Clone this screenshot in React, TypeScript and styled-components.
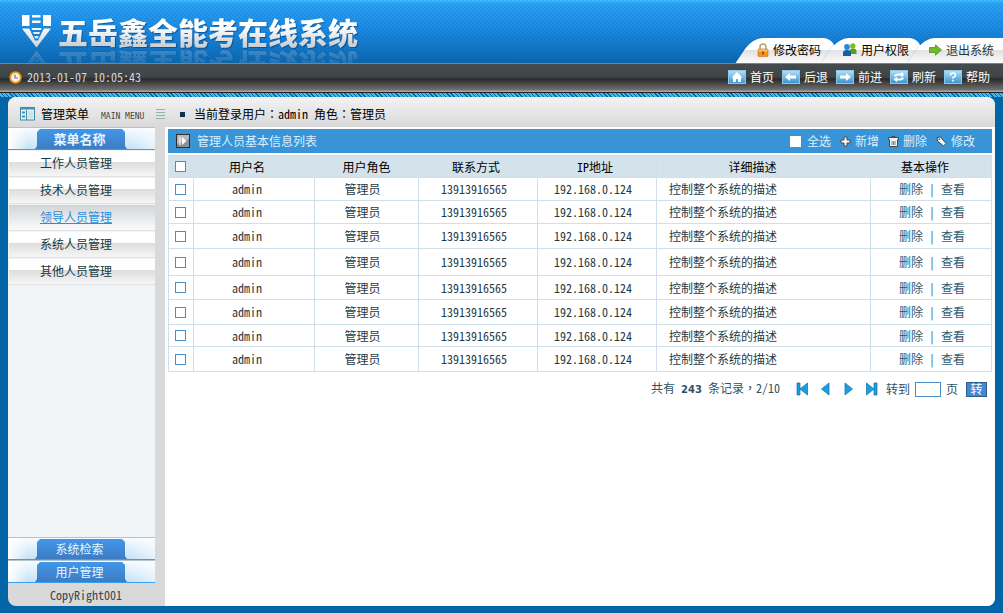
import React from "react";
import styled, { createGlobalStyle, css } from "styled-components";

const GlobalStyle = createGlobalStyle`
  *, *::before, *::after { box-sizing: border-box; }
  html, body { margin: 0; padding: 0; }
  body {
    background: #0465a6;
    color: #1f3a44;
    font-family: "Noto Sans Mono CJK SC", "Liberation Mono", "Noto Sans CJK SC", monospace;
    font-size: 12px;
    line-height: 16px;
  }
  a { color: inherit; text-decoration: none; }
  button, input { font: inherit; margin: 0; }
`;

const Page = styled.div`
  min-height: 100vh;
  display: flex;
  flex-direction: column;
`;

const Header = styled.header`
  height: 64px;
  display: flex;
  justify-content: space-between;
  align-items: flex-start;
  overflow: hidden;
  border-bottom: 1px solid #4f93a6;
  background:
    repeating-conic-gradient(rgba(0, 40, 120, 0.08) 0 25%, transparent 0 50%) 0 0 / 4px 4px,
    linear-gradient(#3cc0ff 0, #2aa3f4 4px, #1b8be2 28px, #0b68b0 63px);
`;

const Brand = styled.div`
  display: flex;
  align-items: flex-start;
  gap: 6px;
  padding: 14px 0 0 22px;
  -webkit-box-reflect: below 2px linear-gradient(transparent 55%, rgba(255, 255, 255, 0.25));
`;

const BrandName = styled.h1`
  margin: 0;
  font-family: "Noto Sans CJK SC", sans-serif;
  font-size: 30px;
  line-height: 34px;
  font-weight: 900;
  color: transparent;
  background: linear-gradient(#fff 40%, #cdd2d6 90%);
  background-clip: text;
  -webkit-background-clip: text;
  filter: drop-shadow(1px 1px 0 rgba(0, 50, 110, 0.5));
`;

const Tabs = styled.nav`
  display: flex;
  align-self: flex-end;
`;

const tabFace = css`
  background: linear-gradient(#fff 0 46%, #e2e2e2 50%, #fbfbfb 100%);
`;

const Tab = styled.a<{ $last?: boolean }>`
  position: relative;
  height: 25px;
  width: ${(p) => (p.$last ? 82 : 86)}px;
  display: flex;
  align-items: center;
  gap: 4px;
  padding: 0 0 2px 8px;
  color: ${(p) => (p.$last ? "#223a44" : "#000")};
  border-radius: 24px ${(p) => (p.$last ? 0 : 12)}px 0 0;
  ${tabFace}

  &::before {
    content: "";
    position: absolute;
    left: -5px;
    bottom: 0;
    width: 24px;
    height: 25px;
    border-top-left-radius: 10px;
    transform: skewX(-34deg);
    box-shadow: -1px 0 1px rgba(0, 60, 120, 0.12);
    ${tabFace}
  }
  svg, span { position: relative; }
`;

const ToolStrip = styled.div`
  height: 29px;
  display: flex;
  align-items: center;
  justify-content: space-between;
  padding: 0 13px 2px 9px;
  border-bottom: 1px solid #222;
  background: linear-gradient(#454b4e 0, #3f4547 13px, #2a2a2a 15px, #4a4a4a 20px, #717171 26px, #a5a5a5 27px);
`;

const Clock = styled.div`
  display: flex;
  align-items: center;
  gap: 5px;
  color: #d4d4d4;
`;

const Tools = styled.nav`
  display: flex;
  gap: 8px;
`;

const Tool = styled.a`
  display: flex;
  align-items: center;
  gap: 4px;
  color: #fff;
`;

const ToolIcon = styled.svg`
  width: 18px;
  height: 14px;
  background: linear-gradient(#b4dcf2, #3a97d4);
  border: 1px solid #8fc6e6;
`;

const Weave = styled.div`
  height: 4px;
  background: repeating-linear-gradient(45deg, #0465a6 0 1px, #4db6e8 1px 3px);
`;

const Shell = styled.div`
  flex: 1;
  display: flex;
  flex-direction: column;
  margin: 0 8px 7px;
  border-radius: 8px;
  overflow: hidden;
  background: #d9d9d9;
`;

const Crumbs = styled.div`
  height: 30px;
  display: flex;
  align-items: center;
  padding: 4px 12px 0;
  color: #000;
  background: linear-gradient(#f3f3f3, #d9d9d9);
`;

const SideHeading = styled.div`
  flex: 0 0 136px;
  display: flex;
  align-items: center;
  gap: 6px;
`;

const SmallCaps = styled.span`
  margin-left: 6px;
  padding-top: 6px;
  font: 8px/12px "DejaVu Sans Mono", monospace;
  color: #444;
`;

const Where = styled.div`
  display: flex;
  align-items: center;
  gap: 9px;
  margin-left: 14px;

  &::before {
    content: "";
    width: 5px;
    height: 5px;
    background: #0b3350;
  }
`;

const Punct = styled.span`
  font-family: "Noto Sans Mono CJK TC", "Noto Sans CJK TC", monospace;
`;

const Columns = styled.div`
  flex: 1;
  display: flex;
  gap: 10px;
`;

const Sidebar = styled.aside`
  flex: 0 0 147px;
  display: flex;
  flex-direction: column;
`;

const SideBody = styled.div`
  flex: 1;
  background: #f0f4f7;
`;

const Group = styled.button<{ $strong?: boolean }>`
  display: block;
  width: 100%;
  height: 23px;
  padding: 1px 29px 0 28px;
  border: 0;
  border-top: 1px solid #b4c4cf;
  border-bottom: 1px solid #3b9fee;
  background: linear-gradient(90deg, #fff, transparent 20px, transparent calc(100% - 24px), #fff8),
    linear-gradient(#f8fcff, #c6e2f6);
  color: #e8f6ff;
  font-size: ${(p) => (p.$strong ? 13 : 12)}px;
  font-weight: ${(p) => (p.$strong ? 700 : 400)};
  line-height: 20px;

  span {
    display: block;
    height: 20px;
    margin: 0 -1px;
    padding-right: 3px;
    background: linear-gradient(#4297ea, #3d7cc2);
    clip-path: polygon(0 100%, 2px 85%, 2px 3px, 5px 0, calc(100% - 5px) 0, calc(100% - 2px) 3px, calc(100% - 2px) 85%, 100% 100%);
  }
`;

const MenuList = styled.ul`
  margin: 0;
  padding: 1px 0 0 1px;
  list-style: none;
`;

const MenuLink = styled.a<{ $on?: boolean }>`
  display: block;
  height: 26px;
  margin-bottom: 1px;
  padding-left: 31px;
  line-height: 23px;
  border-bottom: 1px solid #dfe2e4;
  color: ${(p) => (p.$on ? "#2a8fdc" : "#14393f")};
  text-decoration: ${(p) => (p.$on ? "underline" : "none")};
  background: ${(p) =>
    p.$on ? "linear-gradient(#d2d5d8, #fbfbfb)" : "linear-gradient(#fff 0 42%, #dedede 46%, #f6f6f6 100%)"};
`;

const Copy = styled.footer`
  height: 23px;
  padding: 4px 0 0 42px;
  color: #444;
`;

const Main = styled.main`
  flex: 1;
  min-width: 0;
  padding: 2px 3px 0;
  background: #fff;
`;

const ListBar = styled.div`
  height: 24px;
  display: flex;
  align-items: center;
  justify-content: space-between;
  padding: 0 17px 0 8px;
  margin-bottom: 2px;
  background: #3894d6;
  color: #d9efff;
`;

const ListTitle = styled.h2`
  display: flex;
  align-items: center;
  gap: 7px;
  margin: 0;
  font-size: 12px;
  font-weight: 400;
`;

const Actions = styled.div`
  display: flex;
  align-items: center;
  gap: 9px;
`;

const SelectAll = styled.label`
  display: flex;
  align-items: center;
  gap: 6px;
`;

const Action = styled.button`
  display: flex;
  align-items: center;
  gap: 4px;
  padding: 0;
  border: 0;
  background: none;
  color: inherit;
`;

const Check = styled.input.attrs({ type: "checkbox" })<{ $plain?: boolean }>`
  appearance: none;
  display: block;
  width: 11px;
  height: 11px;
  background: #fff;
  border: 1px solid ${(p) => (p.$plain ? "#fff" : "#4b8ccb")};
  &:checked { background: #4b8ccb; }
`;

const Grid = styled.table`
  width: 100%;
  table-layout: fixed;
  border-collapse: collapse;

  th, td {
    padding: 0;
    border: 1px solid #cfe0ea;
    text-align: center;
    font-weight: 400;
  }
  th {
    height: 22px;
    color: #000;
    background: #d3e2eb;
  }
  th:first-child, td:first-child { padding-left: 6px; }
  th:nth-child(2), td:nth-child(2) { padding-right: 14px; }
  td:nth-child(3), td:nth-child(4), td:nth-child(5) { padding-right: 8px; }
  th:nth-child(4), th:nth-child(5) { padding-right: 4px; }
  th:nth-child(6) { padding-right: 22px; }
  td:nth-child(6) { padding-left: 12px; text-align: left; }
  th:nth-child(7) { padding-right: 12px; }
  td:nth-child(7) { padding-left: 2px; }
`;

const Col = styled.col<{ $w?: number }>`
  width: ${(p) => (p.$w ? `${p.$w}px` : "auto")};
`;

const Row = styled.tr<{ $h: number }>`
  height: ${(p) => p.$h}px;
`;

const RowLinks = styled.span`
  color: #2f5b70;
  white-space: pre;
`;

const Pager = styled.form`
  display: flex;
  align-items: center;
  justify-content: flex-end;
  gap: 6px;
  padding: 8px 5px 0 0;
  color: #2f5363;
`;

const Total = styled.span`
  margin-right: 10px;
  b { margin: 0 6px; font-family: "DejaVu Sans", sans-serif; font-size: 10px; }
`;

const Steps = styled.span`
  display: flex;
  gap: 10px;
  margin-right: 2px;
`;

const Step = styled.button`
  padding: 0;
  border: 0;
  background: none;
  display: flex;
`;

const Jump = styled.label`
  display: flex;
  align-items: center;
  gap: 5px;
`;

const PageBox = styled.input`
  width: 26px;
  height: 15px;
  padding: 0 2px;
  border: 1px solid #4b8ccb;
  background: #fff;
`;

const Go = styled.button`
  width: 21px;
  height: 15px;
  margin-left: 2px;
  padding: 0;
  line-height: 12px;
  border: 1px solid #2c5c8c;
  background: #4289d2;
  color: #fff;
`;

const Logo = () => (
  <svg width="30" height="34" viewBox="0 0 30 34" aria-hidden="true">
    <defs>
      <linearGradient id="metal" gradientUnits="userSpaceOnUse" x1="0" y1="0" x2="0" y2="34">
        <stop offset="0.3" stopColor="#fff" />
        <stop offset="1" stopColor="#ccd3d8" />
      </linearGradient>
    </defs>
    <g fill="url(#metal)">
      <path d="M0 1H7.500V12H0zM21 1H29V12H21zM10 1H18.500V3.500H10zM10 6.500H18.500V9H10z" />
      <path d="M0 14.500H7.200L13 26.500H16L21.800 14.500H29L14.500 33.500z" />
      <path d="M9.500 14H19.500L19 16H10zM11 18H18L17.300 20H11.700zM12.300 22H16.700L16 24.500H13z" />
    </g>
  </svg>
);

const LockIcon = () => (
  <svg width="12" height="14" viewBox="0 0 12 14" aria-hidden="true">
    <path d="M3 7V4a3 3 0 0 1 6 0v3" fill="none" stroke="#b9a27a" strokeWidth="1.6" />
    <rect x="1" y="6" width="10" height="7.500" rx="1" fill="#f0951f" stroke="#c96f08" strokeWidth="0.6" />
    <rect x="1.500" y="6.500" width="9" height="2" fill="#ffc45c" />
    <rect x="5.300" y="8.500" width="1.400" height="3" fill="#6b3a06" />
  </svg>
);

const UsersIcon = () => (
  <svg width="14" height="13" viewBox="0 0 14 13" aria-hidden="true">
    <circle cx="9.800" cy="3" r="2.700" fill="#7dbb2d" />
    <path d="M6.500 11V8q0-2.500 3.500-2.500T13.500 8v3z" fill="#5d9c1c" />
    <circle cx="4" cy="4" r="2.900" fill="#2789d6" />
    <path d="M0 13V9.500Q0 7 4 7t4 2.500V13z" fill="#0d5fae" />
  </svg>
);

const ExitIcon = () => (
  <svg width="13" height="12" viewBox="0 0 13 12" aria-hidden="true">
    <path d="M.5 3.500H6.500V.8L12.500 6l-6 5.200V8.500H.5z" fill="#6dbb2a" stroke="#4b9418" strokeWidth="0.8" />
  </svg>
);

const ClockIcon = () => (
  <svg width="13" height="13" viewBox="0 0 13 13" aria-hidden="true">
    <circle cx="6.500" cy="6.500" r="5.300" fill="#f4f4f4" stroke="#e8971d" strokeWidth="1.800" />
    <path d="M6 3.500V7H9" fill="none" stroke="#777" strokeWidth="1.200" />
  </svg>
);

const MenuIcon = () => (
  <svg width="15" height="14" viewBox="0 0 15 14" aria-hidden="true">
    <rect x="0.500" y="0.500" width="14" height="12.500" fill="#e7f2f6" stroke="#3f87a3" />
    <path d="M0 1.500H15" stroke="#3f93b4" strokeWidth="2" />
    <path d="M2 4.500H5V6.500H2zM2 8.500H5V10.500H2z" fill="#3b95bd" />
    <path d="M6.500 3V13" stroke="#3f87a3" />
    <path d="M8 4H13.500V11.500H8z" fill="#cfe2ea" />
  </svg>
);

const ListIcon = () => (
  <svg width="10" height="11" viewBox="0 0 10 11" aria-hidden="true">
    <path d="M0 .5H9M0 3.500H9M0 6.500H9M0 9.500H9" stroke="#8fb2b6" />
  </svg>
);

const PlayIcon = () => (
  <svg width="14" height="14" viewBox="0 0 14 14" aria-hidden="true">
    <rect x="0.500" y="0.500" width="13" height="13" fill="#8f8f8f" stroke="#2d2d2d" />
    <path d="M1 1H13V5L1 10z" fill="#b9b9b9" />
    <path d="M4 3V11" stroke="#fff" strokeWidth="1.200" />
    <path d="M6 3L10.500 7L6 11z" fill="#fff" />
  </svg>
);

const PlusIcon = () => (
  <svg width="11" height="11" viewBox="0 0 11 11" aria-hidden="true">
    <path d="M4 1H7V4H10V7H7V10H4V7H1V4H4z" fill="#f4f4f4" stroke="#4a4a4a" />
  </svg>
);

const TrashIcon = () => (
  <svg width="11" height="11" viewBox="0 0 11 11" aria-hidden="true">
    <path d="M4 1.500V.5H7V1.500" fill="none" stroke="#4a4a4a" />
    <path d="M.5 1.500H10.500V3.500H9.500V10.500H1.500V3.500H.5z" fill="#f4f4f4" stroke="#4a4a4a" />
    <path d="M4 5V9M5.500 5V9M7 5V9" stroke="#666" strokeWidth="0.800" />
  </svg>
);

const TagIcon = () => (
  <svg width="11" height="11" viewBox="0 0 11 11" aria-hidden="true">
    <path d="M1 1.500L4.500 1L10 7.500L7.500 10L1.500 5z" fill="#f4f4f4" stroke="#4a4a4a" />
    <circle cx="3.200" cy="3.200" r="0.800" fill="#333" />
  </svg>
);

const glyphs: Record<string, React.ReactNode> = {
  首页: <path d="M8 1L2.500 6.500H4V11H7V8H9V11H12V6.500H13.500z" fill="#fff" />,
  后退: <path d="M2 6L7 2V4.500H13V7.500H7V10z" fill="#fff" />,
  前进: <path d="M14 6L9 2V4.500H3V7.500H9V10z" fill="#fff" />,
  刷新: (
    <path
      d="M3 5.500Q3.500 2.500 7 2.500H10V.8L13.500 3.800L10 6.300V4.500H7Q5.500 4.500 5 5.500zM13 6.500Q12.500 9.500 9 9.500H6V11.200L2.500 8.200L6 5.700V7.500H9Q10.500 7.500 11 6.500z"
      fill="#fff"
    />
  ),
  帮助: (
    <path
      d="M5.500 4.500Q5.500 2 8 2T10.500 4.200Q10.500 5.500 8 6.500V7.500M8 8.800V10.500"
      fill="none"
      stroke="#fff"
      strokeWidth="1.600"
    />
  ),
};

const StepIcon = ({ bar, back }: { bar?: boolean; back?: boolean }) => (
  <svg width="13" height="14" viewBox="0 0 13 14" aria-hidden="true">
    <g transform={back ? "translate(13 0) scale(-1 1)" : undefined} fill="#1aa0dc" stroke="#0b6cab" strokeWidth="0.700">
      <path d={bar ? "M1.500 1V13L9 7z" : "M3 1V13L10.500 7z"} />
      {bar && <path d="M9 1H12V13H9z" />}
    </g>
  </svg>
);

const menu = ["工作人员管理", "技术人员管理", "领导人员管理", "系统人员管理", "其他人员管理"];
const heads = ["用户名", "用户角色", "联系方式", "IP地址", "详细描述", "基本操作"];
const rowHeights = [23, 23, 25, 27, 24, 25, 22, 25];

export default function App() {
  return (
    <Page>
      <GlobalStyle />
      <Header>
        <Brand>
          <Logo />
          <BrandName>五岳鑫全能考在线系统</BrandName>
        </Brand>
        <Tabs>
          <Tab href="#password">
            <LockIcon />
            <span>修改密码</span>
          </Tab>
          <Tab href="#rights">
            <UsersIcon />
            <span>用户权限</span>
          </Tab>
          <Tab href="#exit" $last>
            <ExitIcon />
            <span>退出系统</span>
          </Tab>
        </Tabs>
      </Header>
      <ToolStrip>
        <Clock>
          <ClockIcon />
          <time>2013-01-07 10:05:43</time>
        </Clock>
        <Tools>
          {Object.keys(glyphs).map((name) => (
            <Tool href="#" key={name}>
              <ToolIcon viewBox="0 0 16 12" aria-hidden="true">
                {glyphs[name]}
              </ToolIcon>
              {name}
            </Tool>
          ))}
        </Tools>
      </ToolStrip>
      <Weave />
      <Shell>
        <Crumbs>
          <SideHeading>
            <MenuIcon />
            管理菜单
            <SmallCaps>MAIN MENU</SmallCaps>
          </SideHeading>
          <ListIcon />
          <Where>
            <span>
              当前登录用户<Punct>：</Punct>admin 角色<Punct>：</Punct>管理员
            </span>
          </Where>
        </Crumbs>
        <Columns>
          <Sidebar>
            <Group type="button" $strong>
              <span>菜单名称</span>
            </Group>
            <SideBody>
              <MenuList>
                {menu.map((name) => (
                  <li key={name}>
                    <MenuLink href="#" $on={name === "领导人员管理"}>
                      {name}
                    </MenuLink>
                  </li>
                ))}
              </MenuList>
            </SideBody>
            <Group type="button">
              <span>系统检索</span>
            </Group>
            <Group type="button">
              <span>用户管理</span>
            </Group>
            <Copy>CopyRight001</Copy>
          </Sidebar>
          <Main>
            <ListBar>
              <ListTitle>
                <PlayIcon />
                管理人员基本信息列表
              </ListTitle>
              <Actions>
                <SelectAll>
                  <Check $plain />
                  全选
                </SelectAll>
                <Action type="button">
                  <PlusIcon />
                  新增
                </Action>
                <Action type="button">
                  <TrashIcon />
                  删除
                </Action>
                <Action type="button">
                  <TagIcon />
                  修改
                </Action>
              </Actions>
            </ListBar>
            <Grid>
              <colgroup>
                <Col $w={25} />
                <Col $w={121} />
                <Col $w={104} />
                <Col $w={119} />
                <Col $w={119} />
                <Col />
                <Col $w={121} />
              </colgroup>
              <thead>
                <tr>
                  <th>
                    <Check aria-label="全选" />
                  </th>
                  {heads.map((h) => (
                    <th key={h}>{h}</th>
                  ))}
                </tr>
              </thead>
              <tbody>
                {rowHeights.map((h, i) => (
                  <Row key={i} $h={h}>
                    <td>
                      <Check aria-label="admin" />
                    </td>
                    <td>admin</td>
                    <td>管理员</td>
                    <td>13913916565</td>
                    <td>192.168.0.124</td>
                    <td>控制整个系统的描述</td>
                    <td>
                      <RowLinks>
                        <a href="#delete">删除</a> | <a href="#view">查看</a>
                      </RowLinks>
                    </td>
                  </Row>
                ))}
              </tbody>
            </Grid>
            <Pager onSubmit={(e) => e.preventDefault()}>
              <Total>
                共有<b>243</b>条记录<Punct>，</Punct>2/10
              </Total>
              <Steps>
                <Step type="button" aria-label="首页">
                  <StepIcon bar back />
                </Step>
                <Step type="button" aria-label="上一页">
                  <StepIcon back />
                </Step>
                <Step type="button" aria-label="下一页">
                  <StepIcon />
                </Step>
                <Step type="button" aria-label="末页">
                  <StepIcon bar />
                </Step>
              </Steps>
              <Jump>
                转到
                <PageBox type="text" />页
              </Jump>
              <Go type="submit">转</Go>
            </Pager>
          </Main>
        </Columns>
      </Shell>
    </Page>
  );
}
